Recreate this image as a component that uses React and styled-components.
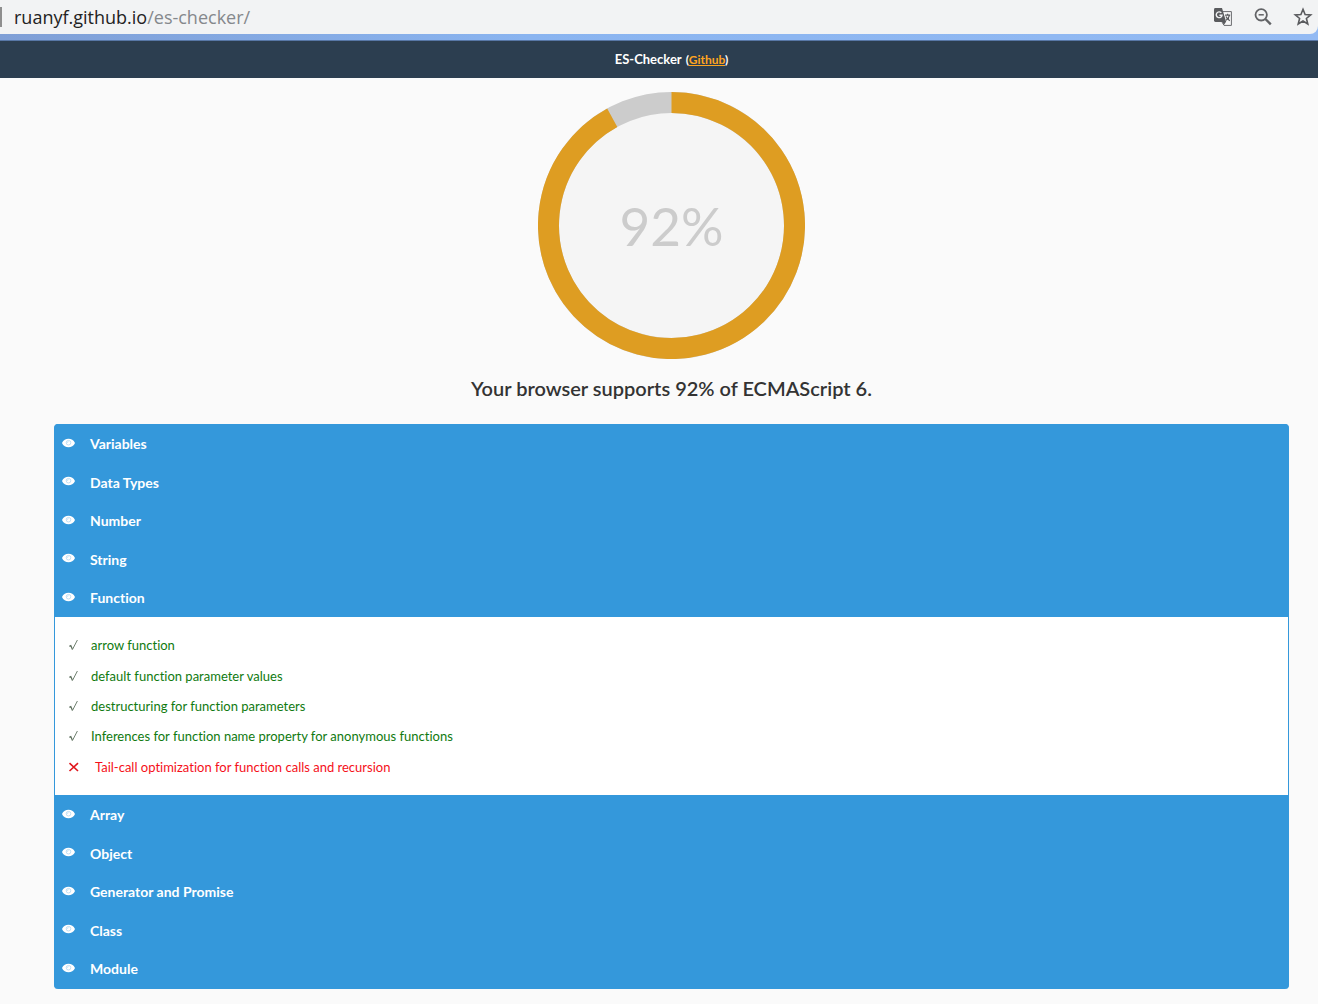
import { useState } from "react";
import styled, { createGlobalStyle } from "styled-components";

const groups = [
  { name: "Variables", tests: [] },
  { name: "Data Types", tests: [] },
  { name: "Number", tests: [] },
  { name: "String", tests: [] },
  {
    name: "Function",
    tests: [
      { label: "arrow function", passed: true },
      { label: "default function parameter values", passed: true },
      { label: "destructuring for function parameters", passed: true },
      {
        label: "Inferences for function name property for anonymous functions",
        passed: true,
      },
      {
        label: "Tail-call optimization for function calls and recursion",
        passed: false,
      },
    ],
  },
  { name: "Array", tests: [] },
  { name: "Object", tests: [] },
  { name: "Generator and Promise", tests: [] },
  { name: "Class", tests: [] },
  { name: "Module", tests: [] },
];

const TranslateIcon = () => (
  <svg width="20" height="20" viewBox="0 0 20 20" aria-hidden="true">
    <path d="M8 4.600h10.400v13.800H11l-2-3.400z" fill="#f8f8f8" stroke="#6a6b6e" />
    <path d="M2.400 1h6.600l4.200 14H2.400A1.400 1.400 0 0 1 1 13.600V2.400A1.400 1.400 0 0 1 2.400 1z" fill="#5a5b5e" />
    <path d="M8.300 5.800A2.900 2.900 0 1 0 9 8.300H6.400" fill="none" stroke="#f1f2f3" strokeWidth="1.400" />
    <path d="M12 8.200h5.200M14.600 6.800v1.400M16.400 8.300c-.4 2.200-1.800 3.900-3.400 4.900M13 9.500c.6 1.600 1.900 3 3.800 4.200" fill="none" stroke="#5a5b5e" strokeWidth="1.200" />
    <path d="M9.500 15h3.400l-2 3z" fill="#5a5b5e" />
  </svg>
);

const ZoomOutIcon = () => (
  <svg width="20" height="20" viewBox="0 0 20 20" aria-hidden="true">
    <g fill="none" stroke="#626366" strokeWidth="1.800">
      <circle cx="8.200" cy="7.800" r="5.700" />
      <path d="M12.400 12l5.400 5.400" strokeWidth="2.400" />
      <path d="M5.600 7.800h5.200" strokeWidth="1.500" />
    </g>
  </svg>
);

const StarIcon = () => (
  <svg width="20" height="20" viewBox="0 0 20 20" aria-hidden="true">
    <path
      d="M10 2.300l2.100 5.200 5.600.4-4.300 3.600 1.400 5.500-4.800-3-4.800 3 1.400-5.500L2.300 7.900l5.600-.4z"
      fill="none"
      stroke="#5a5b5e"
      strokeWidth="1.600"
    />
  </svg>
);

const EyeIcon = () => (
  <svg width="13" height="10" viewBox="0 0 13 10" aria-hidden="true">
    <path d="M0 5C1.300 2 3.800.8 6.500.8S11.700 2 13 5c-1.300 3-3.800 4.200-6.500 4.200S1.300 8 0 5z" fill="#fff" />
    <circle cx="6.500" cy="4.700" r="2.300" fill="none" stroke="#a9d3ef" strokeWidth=".7" />
    <path d="M5.200 4.700c.3-.8.700-1 1.300-1" fill="none" stroke="#8cc4ea" strokeWidth=".6" />
  </svg>
);

const CheckIcon = () => (
  <svg width="12" height="12" viewBox="0 0 12 12" aria-hidden="true">
    <path d="M1.400 7.400l1.400-.8 1.700 3.800" fill="none" stroke="#5d6f5d" strokeWidth="1.300" />
    <path d="M4.500 10.400L9.400 1" fill="none" stroke="#6f806f" />
  </svg>
);

const CrossIcon = () => (
  <svg width="12" height="12" viewBox="0 0 12 12" aria-hidden="true">
    <path d="M1.500 2.200l8.500 7.800M10 2.200L1.500 10" fill="none" stroke="#e0161c" strokeWidth="1.600" />
  </svg>
);

function Gauge({ percent }) {
  const angle = (percent / 100) * Math.PI * 2;
  const x = 133 + 123 * Math.sin(angle);
  const y = 133 - 123 * Math.cos(angle);

  return (
    <GaugeBox>
      <svg width="267" height="267" viewBox="-0.5 -0.5 267 267" aria-hidden="true">
        <circle cx="133" cy="133" r="123" fill="#f5f5f5" stroke="#ccc" strokeWidth="21" />
        <path
          d={`M133 10A123 123 0 1 1 ${x} ${y}`}
          fill="none"
          stroke="#de9d22"
          strokeWidth="21"
        />
      </svg>
      <span>{percent}%</span>
    </GaugeBox>
  );
}

function Group({ group, open, onToggle }) {
  return (
    <>
      <GroupButton type="button" aria-expanded={open} onClick={onToggle}>
        <EyeIcon />
        {group.name}
      </GroupButton>
      {open && group.tests.length > 0 && (
        <TestList>
          {group.tests.map((test) => (
            <Test key={test.label} $passed={test.passed}>
              {test.passed ? <CheckIcon /> : <CrossIcon />}
              {test.label}
            </Test>
          ))}
        </TestList>
      )}
    </>
  );
}

function App() {
  const [opened, setOpened] = useState("Function");

  const toggle = (name) => {
    setOpened((prev) => (prev === name ? "" : name));
  };

  const renderGroup = (group) => (
    <Group
      key={group.name}
      group={group}
      open={opened === group.name}
      onToggle={() => toggle(group.name)}
    />
  );

  return (
    <>
      <GlobalStyle />
      <BrowserFrame>
        <AddressBar>
          <Address>
            ruanyf.github.io<span>/es-checker/</span>
          </Address>
          <Tools>
            <ToolButton type="button" aria-label="Translate">
              <TranslateIcon />
            </ToolButton>
            <ToolButton type="button" aria-label="Zoom out">
              <ZoomOutIcon />
            </ToolButton>
            <ToolButton type="button" aria-label="Bookmark">
              <StarIcon />
            </ToolButton>
          </Tools>
        </AddressBar>
      </BrowserFrame>
      <Header>
        <h1>ES-Checker</h1>
        <small>
          (<a href="https://github.com/ruanyf/es-checker">Github</a>)
        </small>
      </Header>
      <Main>
        <Gauge percent={92} />
        <Summary>Your browser supports 92% of ECMAScript 6.</Summary>
        <Report>
          <Groups>{groups.slice(0, 5).map(renderGroup)}</Groups>
          <Groups>{groups.slice(5).map(renderGroup)}</Groups>
        </Report>
      </Main>
    </>
  );
}

export default App;

const GlobalStyle = createGlobalStyle`
  * {
    box-sizing: border-box;
  }

  body {
    margin: 0;
    background-color: #fafafa;
    color: #333;
    font-family: Lato, sans-serif;
    font-variant-ligatures: none;
  }
`;

const BrowserFrame = styled.div`
  padding-bottom: 6px;
  background: linear-gradient(to right, #7f9fd6, #8ab4f0 40%, #93baf3);
  border-bottom: 1px solid #5877a6;
`;

const AddressBar = styled.div`
  display: flex;
  align-items: center;
  justify-content: space-between;
  height: 34px;
  padding-right: 5px;
  background-color: #f2f3f4;
  border-bottom-right-radius: 8px;
`;

const Address = styled.div`
  display: flex;
  align-items: center;
  height: 20px;
  padding-left: 12px;
  border-left: 2px solid #8e8e8e;
  color: #222;
  font-family: "Open Sans", sans-serif;
  font-size: 18px;

  span {
    color: #85888c;
  }
`;

const Tools = styled.div`
  display: flex;
  gap: 20px;
`;

const ToolButton = styled.button`
  display: flex;
  padding: 0;
  border: 0;
  background: none;
  cursor: pointer;
`;

const Header = styled.header`
  display: flex;
  align-items: baseline;
  justify-content: center;
  gap: 4px;
  height: 37px;
  padding-left: 25px;
  background-color: #2c3e50;
  color: #fff;
  line-height: 37px;

  h1 {
    margin: 0;
    font-size: 13px;
    font-weight: 700;
  }

  small {
    font-size: 12px;
    font-weight: 700;
  }

  a {
    color: #ffa51f;
  }
`;

const Main = styled.main`
  display: flex;
  flex-direction: column;
  align-items: center;
  padding: 14px 29px 15px 54px;
`;

const GaugeBox = styled.div`
  display: grid;
  place-items: center;

  svg,
  span {
    grid-area: 1 / 1;
  }

  span {
    color: #ccc;
    font-size: 53px;
    line-height: 64px;
  }
`;

const Summary = styled.h2`
  margin: 17px 0 24px;
  font-size: 20px;
  font-weight: 600;
  line-height: 24px;
  text-align: center;
`;

const Report = styled.section`
  align-self: stretch;
  overflow: hidden;
  padding-bottom: 1px;
  border: 1px solid #3498db;
  border-width: 0 1px;
  border-radius: 4px;
  background-color: #3498db;
`;

const Groups = styled.div`
  display: flex;
  flex-direction: column;
`;

const GroupButton = styled.button`
  display: flex;
  align-items: center;
  gap: 15px;
  min-height: 39px;
  padding: 0 7px;
  border: 0;
  background-color: #3498db;
  color: #fff;
  font-family: inherit;
  font-size: 14px;
  font-weight: 700;
  font-variant-ligatures: inherit;
  text-align: left;
  cursor: pointer;

  &:nth-of-type(even) {
    min-height: 38px;
  }

  svg {
    margin-bottom: 2px;
  }
`;

const TestList = styled.ul`
  display: grid;
  grid-auto-rows: 1fr;
  min-height: 178px;
  margin: 0;
  padding: 13px;
  background-color: #fff;
  list-style: none;
`;

const Test = styled.li`
  display: flex;
  align-items: center;
  gap: ${({ $passed }) => ($passed ? "11px" : "15px")};
  color: ${({ $passed }) => ($passed ? "#107a10" : "#f5101a")};
  font-size: 13px;
  font-weight: 400;
`;
